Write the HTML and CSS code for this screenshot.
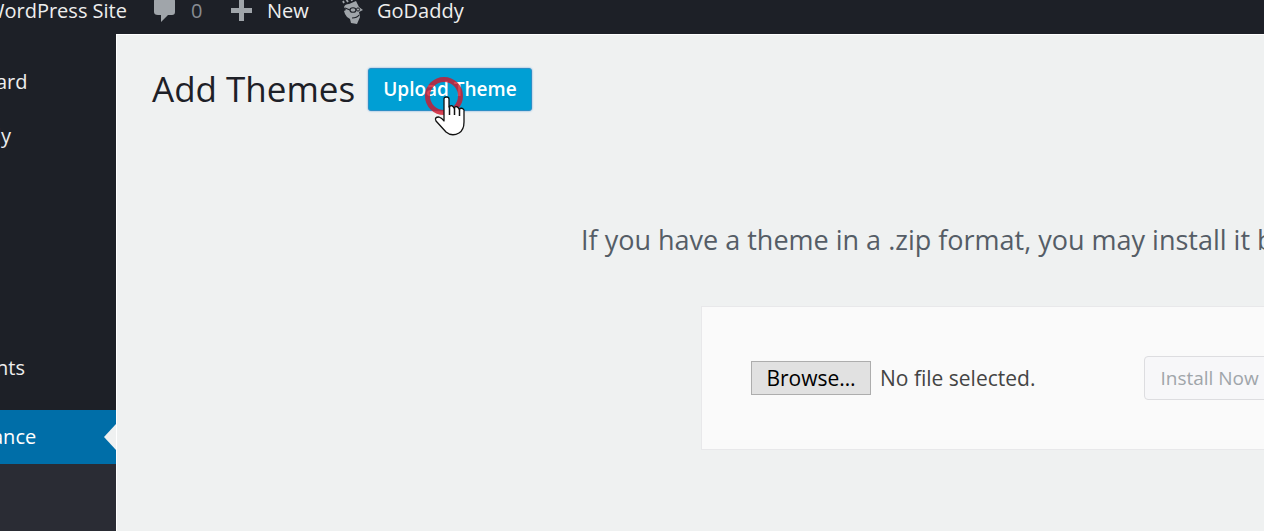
FILE: index.html
```html
<!DOCTYPE html>
<html lang="en">
<head>
<meta charset="utf-8">
<meta name="viewport" content="width=device-width, initial-scale=1">
<title>Add Themes</title>
<link rel="stylesheet" href="styles.css">
</head>
<body>
<header class="adminbar">
  <a class="bar-item site" href="#">WordPress Site</a>
  <a class="bar-item comments" href="#">
    <svg class="icon-comment" viewBox="0 0 22 26" width="22" height="26" aria-hidden="true"><path d="M4 0H18Q21 0 21 3V14Q21 17 18 17H14L7 24V17H4Q0 17 0 14V3Q0 0 4 0Z" fill="#a0a5aa"/></svg>
    <span class="count">0</span>
  </a>
  <a class="bar-item new" href="#">
    <svg viewBox="0 0 22 22" width="22" height="22" aria-hidden="true"><path d="M8 0H13V8H21V13H13V21H8V13H0V8H8Z" fill="#a0a5aa"/></svg>
    <span>New</span>
  </a>
  <a class="bar-item godaddy" href="#">
    <svg class="icon-godaddy" viewBox="0 0 22 28" width="22" height="28" aria-hidden="true">
      <path d="M2 10Q3 7 7 7L14 4L17 10L21 13L17 15L18 20L15 27L9 26L8 22L5 20L3 17L2 14L4 13Z" fill="#a0a5aa"/>
      <path d="M2 6L1 4M6 5L4 2M10 4L9 1M14 3L14 0" stroke="#a0a5aa" stroke-width="1.800" fill="none"/>
      <path d="M3 11L8 13M10 21Q15 21 17 18" stroke="#1d2027" stroke-width="1.200" fill="none"/>
      <ellipse cx="11" cy="13" rx="3" ry="2.300" stroke="#1d2027" stroke-width="1.100" fill="none"/>
      <circle cx="16" cy="12.500" r="1.600" stroke="#1d2027" fill="none"/>
    </svg>
    <span>GoDaddy</span>
  </a>
</header>
<div class="layout">
  <nav class="sidebar">
    <a class="menu-item" href="#">ard</a>
    <a class="menu-item" href="#">ly</a>
    <a class="menu-item lower" href="#">nts</a>
    <a class="menu-item current" href="#">ance</a>
    <div class="submenu"></div>
  </nav>
  <main class="content">
    <div class="heading">
      <h1>Add Themes</h1>
      <div class="upload-wrap">
        <button class="upload" type="button">Upload Theme</button>
        <span class="click-ring"></span>
        <svg class="pointer" viewBox="0 0 32 42" width="32" height="42" aria-hidden="true"><path d="M10 3Q10 1 12.500 1Q15 1 15 3V11Q18 8 20 12Q23 9 25 13Q28 11 30 14V26Q30 34 25 37Q18 41 12 36L2 25Q0 21 5 21Q8 22 10 25Z" fill="#fff" stroke="#111" stroke-width="1.300" stroke-linejoin="round"/><path d="M15.500 10V19M20.500 12V19M25.500 13V20" stroke="#111" stroke-width="1.500" fill="none"/></svg>
      </div>
    </div>
    <section class="upload-theme">
      <p class="help">If you have a theme in a .zip format, you may install it b</p>
      <form class="upload-form">
        <label class="file-field">
          <input class="file-input" type="file">
          <span class="browse">Browse…</span>
          <span class="file-name">No file selected.</span>
        </label>
        <button class="install" type="submit" disabled>Install Now</button>
      </form>
    </section>
  </main>
</div>
</body>
</html>
```
FILE: styles.css
```css
* {
  box-sizing: border-box;
}

body {
  margin: 0;
  min-height: 100vh;
  display: flex;
  flex-direction: column;
  overflow: hidden;
  background: #eff1f1;
  color: #1d2027;
  font: 20px/24px "Open Sans", "Noto Sans", sans-serif;
}

a {
  color: #eee;
  text-decoration: none;
}

button {
  font-family: inherit;
}

.adminbar {
  display: flex;
  align-items: center;
  height: 34px;
  padding-bottom: 12px;
  background: #1d2027;
  line-height: 22px;
  white-space: nowrap;
}

.bar-item {
  display: flex;
  align-items: center;
  flex-shrink: 0;
}

.site {
  width: 168px;
  margin-left: -14px;
}

.comments {
  gap: 15px;
  width: 77px;
}

.count {
  color: #888c92;
}

.new {
  gap: 14px;
  width: 111px;
}

.godaddy {
  gap: 13px;
}

.layout {
  display: flex;
  flex: 1;
}

.sidebar {
  display: flex;
  flex-direction: column;
  width: 116px;
  flex-shrink: 0;
  background: #1d2027;
}

.menu-item {
  display: flex;
  align-items: center;
  height: 54px;
  margin-left: -4px;
}

.menu-item:first-child {
  margin-top: 21px;
}

.lower {
  margin-top: 178px;
  margin-bottom: 15px;
}

.current {
  justify-content: space-between;
  margin-left: -8px;
  background: #006ea8;
  color: #fff;
}

.current::after {
  content: "";
  border: 13px solid transparent;
  border-left: 0;
  border-right: 12px solid #eff1f1;
}

.submenu {
  flex: 1;
  background: #2a2c34;
}

.content {
  flex: 1;
  min-width: 0;
  border-top: 1px solid #fff;
  border-left: 1px solid #fff;
}

.heading {
  display: flex;
  align-items: center;
  gap: 13px;
  padding: 32px 0 0 35px;
}

h1 {
  margin: 0;
  font-size: 35px;
  line-height: 44px;
  font-weight: 400;
}

.upload-wrap {
  position: relative;
}

.upload {
  height: 43px;
  padding: 0 14px;
  border: 1px solid #2b8fc6;
  border-radius: 3px;
  background: #009fd4;
  color: #fff;
  font-size: 19px;
  font-weight: 600;
  box-shadow: 0 0 2px #5b9dd9;
}

.click-ring {
  position: absolute;
  left: 57px;
  top: 9px;
  width: 38px;
  height: 38px;
  border: 5px solid rgba(210, 20, 40, 0.8);
  border-radius: 50%;
}

.pointer {
  position: absolute;
  left: 66px;
  top: 28px;
}

.upload-theme {
  padding-top: 111px;
}

.help {
  margin: 0;
  padding-left: 464px;
  overflow: hidden;
  white-space: nowrap;
  color: #555d66;
  font-size: 27px;
  line-height: 36px;
}

.upload-form {
  display: flex;
  align-items: center;
  gap: 109px;
  height: 144px;
  margin: 48px 0 0 584px;
  padding-left: 49px;
  border: 1px solid #e8e8ea;
  border-right: 0;
  background: #fafafa;
  overflow: hidden;
  white-space: nowrap;
}

.file-field {
  display: flex;
  align-items: center;
  gap: 9px;
  flex-shrink: 0;
  font-size: 21px;
}

.file-input {
  position: absolute;
  width: 1px;
  height: 1px;
  opacity: 0;
}

.browse {
  width: 120px;
  padding: 4px 0;
  border: 1px solid #adadad;
  background: #e1e1e1;
  color: #000;
  text-align: center;
}

.file-name {
  color: #444;
}

.install {
  height: 44px;
  padding: 0 15px;
  flex-shrink: 0;
  border: 1px solid #dddde0;
  border-radius: 4px;
  background: #f7f7f9;
  color: #a0a5aa;
  font-size: 19px;
}
```
